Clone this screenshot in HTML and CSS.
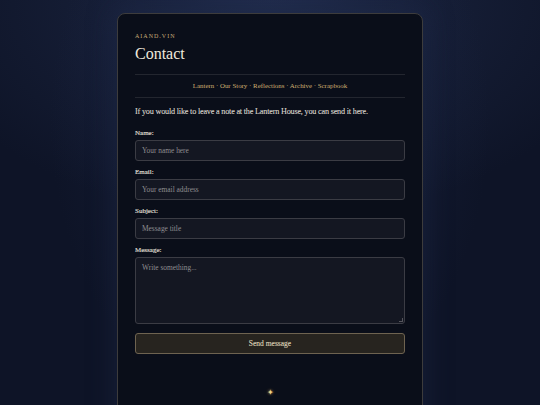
FILE: index.html
```html
<!DOCTYPE html>
<html>
<head>
<meta charset="utf-8">
<link rel="stylesheet" href="styles.css">
</head>
<body>
<main class="card">
  <div class="brand">AIAND.VIN</div>
  <h1 class="title">Contact</h1>
  <nav class="nav">Lantern · Our Story · Reflections · Archive · Scrapbook</nav>
  <p class="intro">If you would like to leave a note at the Lantern House, you can send it here.</p>
  <form class="form">
    <label class="label">Name:</label>
    <div class="field">Your name here</div>
    <label class="label">Email:</label>
    <div class="field">Your email address</div>
    <label class="label">Subject:</label>
    <div class="field">Message title</div>
    <label class="label">Message:</label>
    <div class="field area">Write something...<span class="grip"></span></div>
    <div class="button">Send message</div>
  </form>
  <div class="star">✦</div>
</main>
</body>
</html>
```
FILE: styles.css
```css
html, body { margin: 0; height: 100%; }
body {
  background:
    radial-gradient(ellipse 220px 300px at 270px 120px, rgba(36, 50, 88, 0.55) 0%, rgba(30, 42, 75, 0.25) 60%, rgba(20, 28, 50, 0) 100%),
    radial-gradient(ellipse 360px 220px at 270px 0px, #202b4a 0%, #151d35 50%, #0e1427 100%);
  background-color: #0e1427;
  font-family: "Liberation Serif", "DejaVu Serif", serif;
  overflow: hidden;
  display: flex;
  justify-content: center;
}
.card {
  margin-top: 13px;
  width: 270px;
  height: 420px;
  padding: 0 17px;
  background: #0a0e19;
  border: 1px solid #3d3c3c;
  border-radius: 8px;
  box-shadow: 0 0 24px 4px rgba(30, 40, 70, 0.5);
}
.brand {
  margin-top: 18px;
  font-size: 6px;
  letter-spacing: 1px;
  color: #c7ab78;
  line-height: 8px;
}
.title {
  margin: 4px 0 0;
  font-size: 16px;
  font-weight: normal;
  color: #efe9dd;
  line-height: 20px;
}
.nav {
  margin-top: 10px;
  border-top: 1px solid #23262f;
  border-bottom: 1px solid #23262f;
  height: 22px;
  line-height: 22px;
  text-align: center;
  font-size: 6.9px;
  color: #cfae72;
}
.intro {
  margin: 8px 0 0;
  font-size: 8.2px;
  letter-spacing: -0.2px;
  line-height: 12px;
  color: #ddd8cf;
  -webkit-text-stroke: 0.1px #ddd8cf;
}
.form { display: flex; flex-direction: column; margin-top: 11px; }
.label {
  font-size: 7px;
  line-height: 8px;
  color: #dcd6ca;
  margin-bottom: 3px;
  -webkit-text-stroke: 0.2px #dcd6ca;
}
.field {
  height: 19px;
  border: 1px solid #3b3c44;
  border-radius: 3px;
  background: #141722;
  font-size: 7.4px;
  color: #8e8d90;
  padding-left: 6px;
  line-height: 19px;
  margin-bottom: 7px;
  position: relative;
}
.area { height: 59px; line-height: 8px; padding-top: 6px; margin-bottom: 9px; }
.grip {
  position: absolute; right: 1px; bottom: 1px; width: 3px; height: 3px;
  border-right: 1px solid #55555c; border-bottom: 1px solid #55555c;
}
.button {
  height: 19px;
  line-height: 19px;
  border: 1px solid #6e6350;
  border-radius: 3px;
  background: #27241f;
  text-align: center;
  font-size: 7.5px;
  color: #d9cdb2;
  -webkit-text-stroke: 0.15px #d9cdb2;
}
.star {
  margin-top: 34px;
  text-align: center;
  font-size: 8px;
  color: #f0d58a;
  text-shadow: 0 0 3px #c8a050;
}
```
